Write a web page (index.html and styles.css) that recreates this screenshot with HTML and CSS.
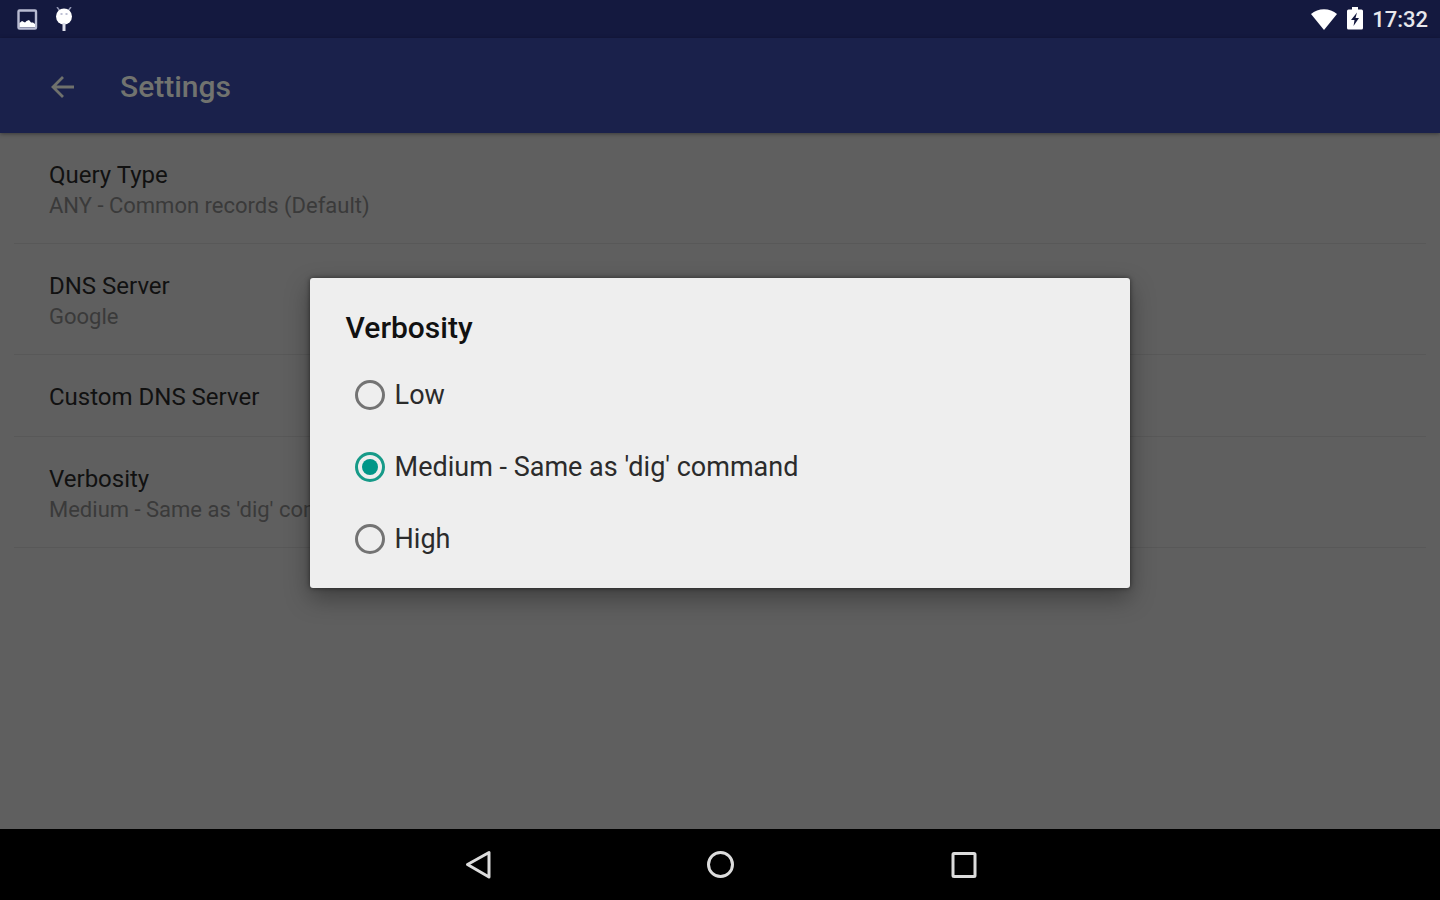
FILE: index.html
```html
<!DOCTYPE html>
<html lang="en">
<head>
<meta charset="utf-8">
<meta name="viewport" content="width=device-width, initial-scale=1">
<title>Settings</title>
<link rel="stylesheet" href="styles.css">
</head>
<body>
<div class="statusbar">
  <div class="status-group notifications">
    <svg class="status-icon" viewBox="0 0 24 24" aria-hidden="true">
      <rect x="3.500" y="3.500" width="17.500" height="18" rx="1" fill="none" stroke="#b9bcd2" stroke-width="2.400"/>
      <path d="M4.500 20v-4l2.500-2 3 1.500 1.500-1.500 2.500-1 2 2.500h2l2 1.500v3z" fill="#fff"/>
    </svg>
    <svg class="status-icon" viewBox="0 0 24 24" aria-hidden="true">
      <path d="M5 0l3 4M19 0l-3 4" stroke="#8f93b0" stroke-width="1.500"/>
      <circle cx="12" cy="9.500" r="8" fill="#fff"/>
      <path d="M12 16v8" stroke="#dcdeea" stroke-width="3"/>
      <path d="M8.500 7h2M13.500 7h2" stroke="#a9adc6" stroke-width="1.500"/>
    </svg>
  </div>
  <div class="status-group">
    <svg class="wifi" viewBox="0 0 28 24" aria-hidden="true">
      <path d="M14 23L1 7C8 .5 20 .5 27 7z" fill="#fff"/>
    </svg>
    <svg class="battery" viewBox="0 0 16 24" aria-hidden="true">
      <path d="M5 0h6v2.500h3.500q1.500 0 1.500 1.500v17q0 1.500-1.500 1.500h-13q-1.500 0-1.500-1.500V4q0-1.500 1.500-1.500H5z" fill="#fff"/>
      <path d="M10 5.500L4 13h3.500l-1 6L12 11H8.500z" fill="#14193f"/>
    </svg>
    <time class="clock">17:32</time>
  </div>
</div>
<header class="toolbar">
  <button class="back" type="button" aria-label="Back">
    <svg viewBox="0 0 24 24" aria-hidden="true"><path d="M24 12H3M13 2L3 12l10 10" fill="none" stroke="#6f716c" stroke-width="2.800"/></svg>
  </button>
  <h1 class="toolbar-title">Settings</h1>
</header>
<main class="preferences">
  <section class="preference">
    <h2 class="preference-title">Query Type</h2>
    <p class="preference-summary">ANY - Common records (Default)</p>
  </section>
  <section class="preference">
    <h2 class="preference-title">DNS Server</h2>
    <p class="preference-summary">Google</p>
  </section>
  <section class="preference">
    <h2 class="preference-title">Custom DNS Server</h2>
  </section>
  <section class="preference">
    <h2 class="preference-title">Verbosity</h2>
    <p class="preference-summary">Medium - Same as 'dig' command</p>
  </section>
</main>
<nav class="navbar" aria-label="System navigation">
  <button class="nav-button" type="button" aria-label="Back">
    <svg viewBox="0 0 32 32" aria-hidden="true"><path d="M28 3.500v24.500L6.500 15.500z" fill="none" stroke="#dcdcdc" stroke-width="3" stroke-linejoin="round"/></svg>
  </button>
  <button class="nav-button" type="button" aria-label="Home">
    <svg viewBox="0 0 32 32" aria-hidden="true"><circle cx="16.500" cy="15.500" r="12" fill="none" stroke="#dcdcdc" stroke-width="3"/></svg>
  </button>
  <button class="nav-button" type="button" aria-label="Overview">
    <svg viewBox="0 0 32 32" aria-hidden="true"><rect x="6" y="4.500" width="22" height="23" rx="1" fill="none" stroke="#dcdcdc" stroke-width="3"/></svg>
  </button>
</nav>
<div class="dialog-layer">
  <form class="dialog" role="dialog" aria-labelledby="dialog-title">
    <h2 class="dialog-title" id="dialog-title">Verbosity</h2>
    <label class="choice"><input class="radio" type="radio" name="verbosity" value="low"><span>Low</span></label>
    <label class="choice"><input class="radio" type="radio" name="verbosity" value="medium" checked><span>Medium - Same as 'dig' command</span></label>
    <label class="choice"><input class="radio" type="radio" name="verbosity" value="high"><span>High</span></label>
  </form>
</div>
</body>
</html>
```
FILE: styles.css
```css
* {
  box-sizing: border-box;
}

body {
  position: relative;
  display: flex;
  flex-direction: column;
  min-height: 100vh;
  margin: 0;
  background: #5f5f5f;
  font-family: Roboto, "Noto Sans", sans-serif;
}

h1,
h2,
p {
  margin: 0;
  font-weight: 400;
}

button {
  padding: 0;
  border: 0;
  background: none;
}

svg {
  display: block;
}

.statusbar {
  display: flex;
  justify-content: space-between;
  align-items: center;
  height: 38px;
  padding: 0 12px 0 15px;
  background: #14193f;
}

.status-group {
  display: flex;
  align-items: center;
  gap: 9px;
}

.notifications {
  gap: 13px;
}

.status-icon {
  width: 24px;
  height: 24px;
}

.wifi {
  width: 28px;
  height: 24px;
}

.battery {
  width: 16px;
  height: 24px;
}

.clock {
  padding-top: 2px;
  color: #e8e8ec;
  font-size: 22px;
  font-weight: 500;
  line-height: 36px;
}

.toolbar {
  display: flex;
  align-items: center;
  gap: 46px;
  height: 95px;
  padding: 2px 50px 0;
  background: #1a214b;
  box-shadow: 0 1px 4px rgba(0, 0, 0, 0.4);
}

.back {
  width: 24px;
  height: 24px;
}

.toolbar-title {
  color: #71736f;
  font-size: 30px;
  font-weight: 500;
  line-height: 40px;
}

.preferences {
  flex: 1;
  padding: 0 14px;
}

.preference {
  padding: 26px 35px 23px;
  border-bottom: 1px solid #585858;
}

.preference-title {
  color: #111;
  font-size: 24px;
  line-height: 32px;
}

.preference-summary {
  color: #3a3a3a;
  font-size: 22px;
  line-height: 29px;
}

.navbar {
  display: flex;
  justify-content: center;
  align-items: center;
  gap: 211px;
  height: 71px;
  background: #000;
}

.nav-button,
.nav-button svg {
  width: 32px;
  height: 32px;
}

.dialog-layer {
  position: absolute;
  inset: 38px 0 72px;
  display: flex;
  justify-content: center;
  align-items: center;
}

.dialog {
  width: 57%;
  padding: 28px 36px 13px;
  border-radius: 3px;
  background: #eee;
  box-shadow: 0 10px 24px rgba(0, 0, 0, 0.35), 0 0 5px rgba(0, 0, 0, 0.5);
}

.dialog-title {
  padding-bottom: 9px;
  color: #111;
  font-size: 30px;
  font-weight: 500;
  line-height: 44px;
}

.choice {
  display: flex;
  align-items: center;
  gap: 10px;
  height: 72px;
  padding-left: 9px;
  color: #2b2b2b;
  font-size: 27px;
}

.radio {
  display: grid;
  place-items: center;
  width: 30px;
  height: 30px;
  margin: 0;
  border: 3px solid #737373;
  border-radius: 50%;
  appearance: none;
}

.radio:checked {
  border-color: #169a88;
}

.radio:checked::before {
  width: 16px;
  height: 16px;
  border-radius: 50%;
  background: #009688;
  content: "";
}
```
